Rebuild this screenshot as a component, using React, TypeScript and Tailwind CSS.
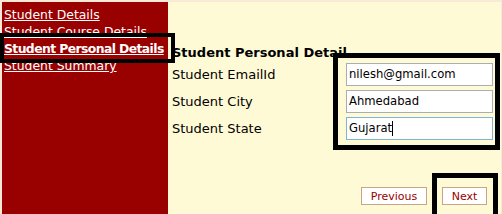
import React from "react";

const font = { fontFamily: '"DejaVu Sans", Verdana, sans-serif' };

export default function App() {
  return (
    <div
      className="relative w-[502px] h-[214px] overflow-hidden bg-[#fbe9d8] pt-[2px] pl-[2px] pr-[1px] flex"
      style={font}
    >
      <div className="w-[166px] shrink-0 h-full bg-[#990000] pt-[4px] pl-[2px] flex flex-col text-[12.4px] leading-[17px] text-white whitespace-nowrap">
        <a className="underline">Student Details</a>
        <a className="underline">Student Course Details</a>
        <a className="underline font-bold tracking-[-0.6px]">Student Personal Details</a>
        <a className="underline">Student Summary</a>
      </div>
      <div className="flex-1 h-full bg-[#fffad6] flex flex-col pl-[4px] pt-[42px] pb-[9px]">
        <div className="text-[13px] leading-[17px] font-bold text-black whitespace-nowrap">
          Student Personal Detail
        </div>
        <div className="mt-[2px] flex flex-col gap-[4px]">
          {[
            ["Student EmailId", "nilesh@gmail.com", false],
            ["Student City", "Ahmedabad", false],
            ["Student State", "Gujarat", true],
          ].map(([label, value, focus]) => (
            <div key={label as string} className="flex items-center h-[23px]">
              <div className="w-[174px] text-[13px] text-black">{label}</div>
              <div
                className={
                  "w-[147px] h-[23px] border bg-white flex items-center pl-[2px] text-[11.6px] text-black " +
                  (focus ? "border-[#7eb4d8]" : "border-[#a9aeb3]")
                }
              >
                {value}
                {focus ? <span className="inline-block w-[1px] h-[15px] bg-black" /> : null}
              </div>
            </div>
          ))}
        </div>
        <div className="mt-auto flex justify-end gap-[15px] pr-[14px]">
          <button className="w-[66px] h-[18px] border border-[#c9a486] bg-white text-[11px] leading-none text-[#990000]">
            Previous
          </button>
          <button className="w-[45px] h-[18px] border border-[#c9a486] bg-white text-[11px] leading-none text-[#990000]">
            Next
          </button>
        </div>
      </div>

      <div className="absolute left-0 top-[33px] w-[175px] h-[30px] border-[4px] border-black pointer-events-none" />
      <div className="absolute left-[333px] top-[53px] w-[167px] h-[97px] border-[5px] border-black pointer-events-none" />
      <div className="absolute left-[432px] top-[173px] w-[66px] h-[50px] border-[5px] border-black pointer-events-none" />
    </div>
  );
}
